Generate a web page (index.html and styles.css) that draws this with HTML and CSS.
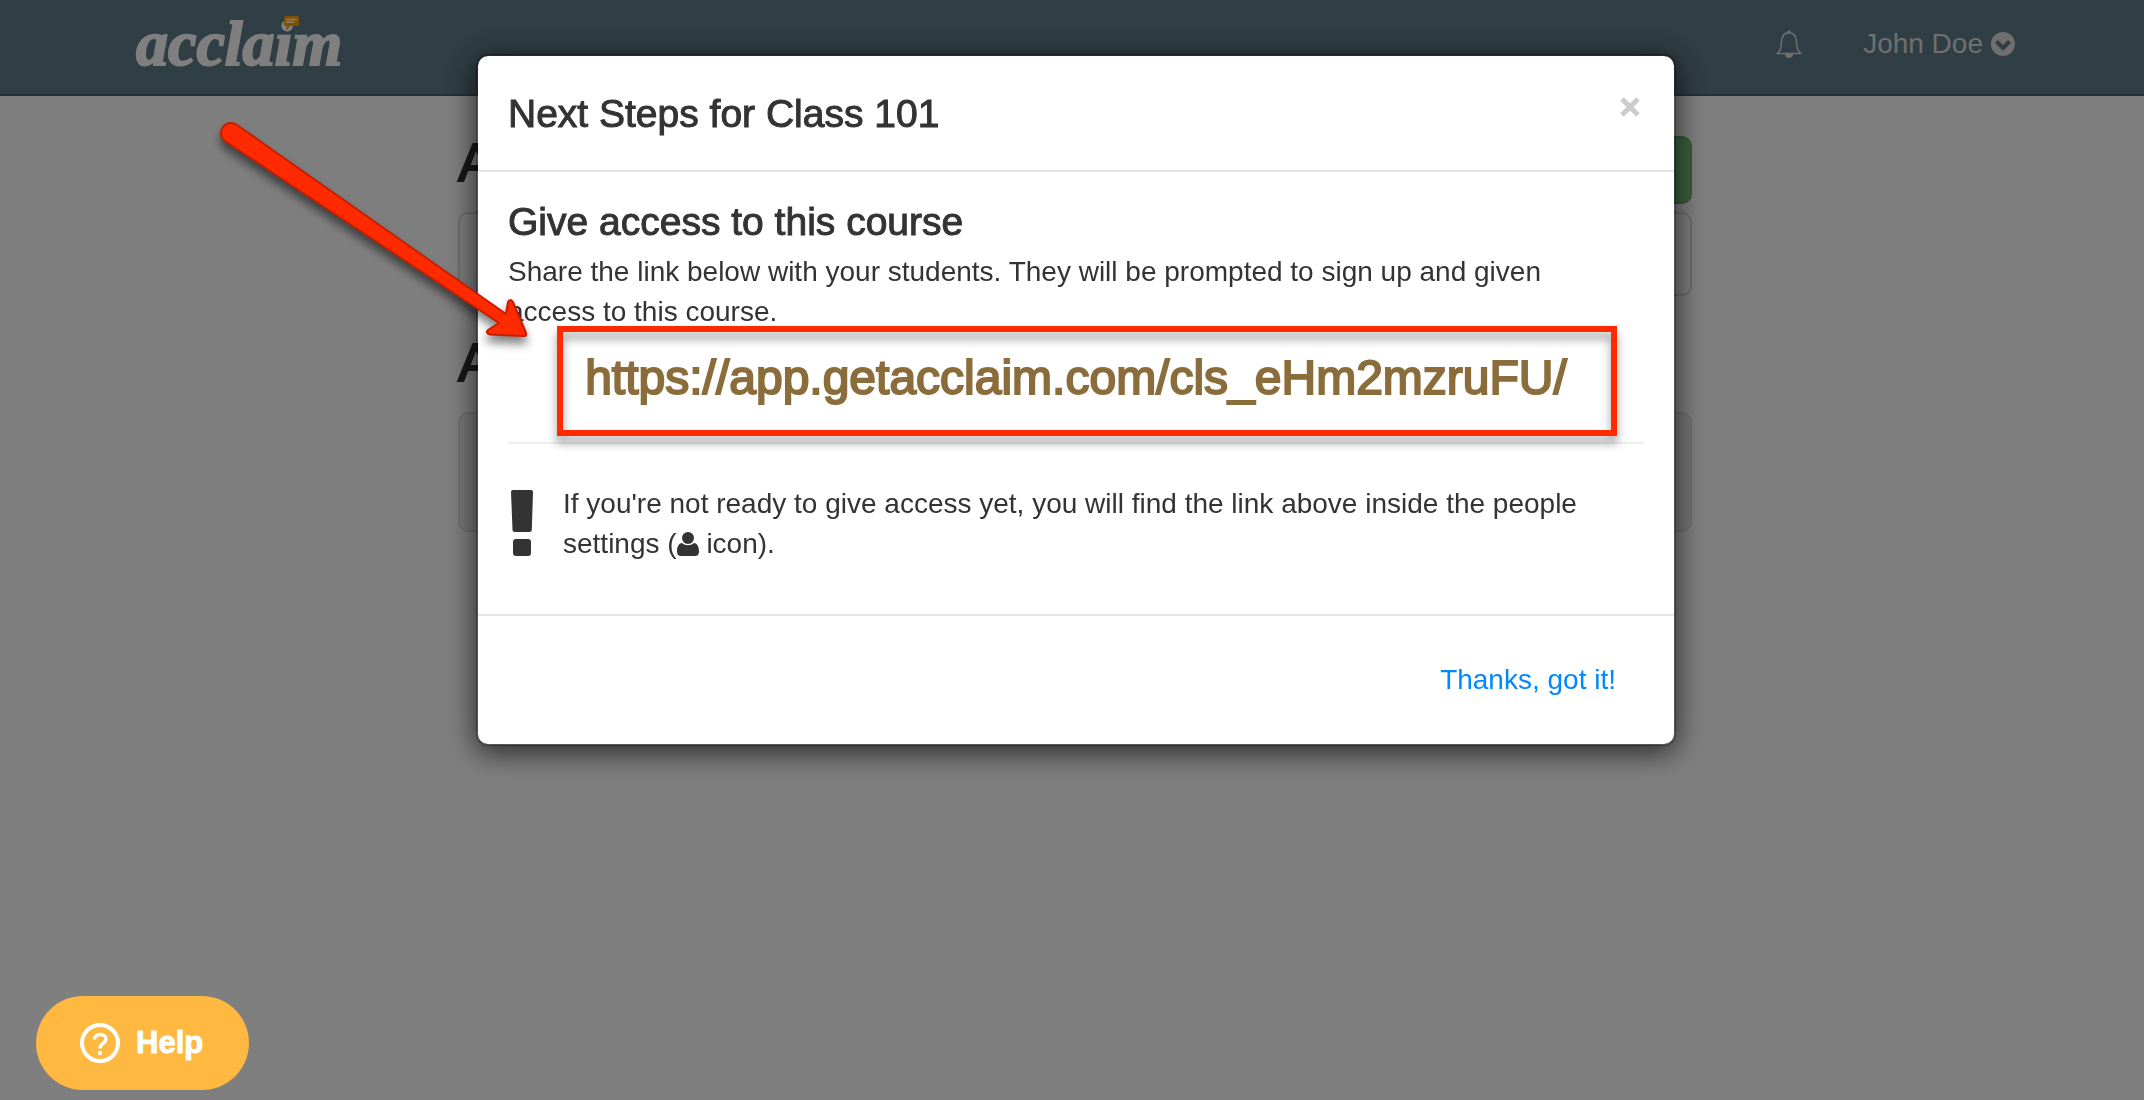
FILE: index.html
```
<!DOCTYPE html>
<html lang="en">

<head>
    <meta charset="UTF-8">
    <meta name="viewport" content="width=device-width, initial-scale=1.0">
    <title>Acclaim</title>
    <link rel="stylesheet" href="styles.css">
</head>

<body>
    <header class="navbar">
        <a class="logo" href="#">acclaim
            <svg class="logo_bubble" viewBox="0 0 15 15">
                <path d="M1.500 0h12a1.500 1.500 0 0 1 1.500 1.500v7a1.500 1.500 0 0 1-1.500 1.500H6l-3.500 4.500V10h-1A1.500 1.500 0 0 1 0 8.500v-7A1.500 1.500 0 0 1 1.500 0z" fill="#ffa000" />
                <path d="M2 3.500h11M2 6h8" stroke="#fff" stroke-width="1.300" />
            </svg>
        </a>
        <nav class="nav_right">
            <button class="bell" aria-label="Notifications">
                <svg viewBox="0 0 26 28">
                    <path d="M1 23.500c4-3 4-6 4.500-12C6 6 9 2.800 13 2.800s7 3.200 7.500 8.700c.5 6 .5 9 4.500 12z" fill="none" stroke="currentColor" stroke-width="1.500" stroke-linejoin="round" />
                    <circle cx="13" cy="1.800" r="1.500" fill="currentColor" />
                    <path d="M9 24a4 4 0 0 0 8 0z" fill="currentColor" />
                </svg>
            </button>
            <a class="user" href="#">John Doe
                <svg viewBox="0 0 24 24">
                    <circle cx="12" cy="12" r="12" fill="currentColor" />
                    <path d="M5.500 9.500l6.500 6.500 6.500-6.500" fill="none" stroke="#607c8a" stroke-width="4" />
                </svg>
            </a>
        </nav>
    </header>

    <main class="page">
        <div class="page_head">
            <h2>Active</h2>
            <button class="btn_new" aria-label="New class"></button>
        </div>
        <div class="panel"></div>
        <h2 class="archived">Archived</h2>
        <div class="panel well"></div>
    </main>

    <div class="backdrop">
        <div class="modal" role="dialog" aria-labelledby="modal_title">
            <div class="modal_header">
                <h3 id="modal_title">Next Steps for Class 101</h3>
                <button class="close" aria-label="Close">
                    <svg viewBox="0 0 20 20">
                        <path d="M2 2l16 16M18 2L2 18" stroke="currentColor" stroke-width="5" />
                    </svg>
                </button>
            </div>
            <div class="modal_body">
                <h3>Give access to this course</h3>
                <p class="intro">Share the link below with your students. They will be prompted to sign up and given access to this course.</p>
                <div class="link_wrap">
                    <a href="#">https://app.getacclaim.com/cls_eHm2mzruFU/</a>
                </div>
                <div class="note">
                    <svg class="mark" viewBox="0 0 22 66">
                        <path d="M2 0h18a2 2 0 0 1 2 2l-1.200 37.500a2.500 2.500 0 0 1-2.500 2.500H4a2.500 2.500 0 0 1-2.500-2.500L0 2a2 2 0 0 1 2-2z" />
                        <rect x="2" y="49" width="18" height="17" rx="3" />
                    </svg>
                    <p>If you're not ready to give access yet, you will find the link above inside the people settings (<svg class="person" viewBox="0 0 22 24">
                            <path d="M5 11c3.500 3 8.500 3 12 0 3.500.300 5 4 5 8.500 0 3-1.500 4.500-4 4.500H4c-2.500 0-4-1.500-4-4.500C0 15 1.500 11.300 5 11z" />
                            <circle cx="11" cy="6" r="6" />
                        </svg> icon).</p>
                </div>
            </div>
            <div class="modal_footer">
                <a href="#">Thanks, got it!</a>
            </div>
        </div>
    </div>

    <svg class="arrow" viewBox="0 0 340 240">
        <path d="M37 15L306 204L308 192Q310 188 313 192L326 223Q327 226.500 323 226L290 224.500Q285 223 288 220L299 213L25 31A9.800 9.800 0 0 1 37 15z" fill="#ff2a00" stroke="#c81e00" stroke-width="2" stroke-linejoin="round" />
    </svg>

    <button class="help">
        <svg viewBox="0 0 40 40">
            <circle cx="20" cy="20" r="18" fill="none" stroke="#fff" stroke-width="4" />
            <path d="M14.500 16.500c0-7 11.500-6.500 11.500-.5 0 4.500-6 4-6 9.500" fill="none" stroke="#fff" stroke-width="3.500" />
            <circle cx="20" cy="30" r="2.200" fill="#fff" />
        </svg>
        Help
    </button>
</body>

</html>
```
FILE: styles.css
```
* {
    margin: 0;
    padding: 0;
    box-sizing: border-box;
}

body {
    background-color: #fff;
    color: #333;
    font-family: "Helvetica Neue", "Liberation Sans", Arial, sans-serif;
    font-size: 28px;
    line-height: 40px;
    min-height: 100vh;
}

a {
    text-decoration: none;
}

button {
    border: 0;
    background: none;
    font-family: inherit;
    cursor: pointer;
}

svg {
    display: block;
}

/* top bar */
.navbar {
    display: flex;
    justify-content: space-between;
    height: 96px;
    padding: 0 129px 0 136px;
    background-color: #607c8a;
    border-bottom: 2px solid #4c6070;
}

.logo {
    position: relative;
    color: #fff;
    font-family: "Liberation Serif", serif;
    font-size: 64px;
    font-weight: bold;
    font-style: italic;
    line-height: 88px;
    -webkit-text-stroke: 2px #fff;
}

.logo_bubble {
    position: absolute;
    top: 16px;
    left: 148px;
    width: 15px;
    height: 15px;
}

.nav_right {
    display: flex;
    align-items: center;
    gap: 61px;
    height: 88px;
}

.bell,
.user {
    color: #dedede;
}

.bell svg {
    width: 26px;
    height: 28px;
}

.user {
    display: flex;
    align-items: center;
    gap: 8px;
}

.user svg {
    width: 24px;
    height: 24px;
}

/* class list */
.page {
    width: 1234px;
    max-width: 100%;
    margin: 40px auto 0;
    position: relative;
    left: 3px;
}

.page h2 {
    font-size: 54px;
    font-weight: normal;
    line-height: 52px;
    -webkit-text-stroke: 2px #333;
}

.page_head {
    display: flex;
    justify-content: space-between;
    height: 68px;
    margin-bottom: 8px;
}

.btn_new {
    width: 220px;
    background-color: #78c37c;
    border: 2px solid #6eb471;
    border-radius: 10px;
}

.panel {
    height: 84px;
    border: 2px solid #dcdcdc;
    border-radius: 10px;
}

.page .archived {
    margin: 40px 0 24px;
}

.well {
    height: 120px;
    background-color: #f0f0f0;
    border-color: #e0e0e0;
}

/* modal */
.backdrop {
    position: fixed;
    inset: 0;
    padding: 54px 0 0 8px;
    background-color: rgba(0, 0, 0, 0.5);
}

.modal {
    width: 1200px;
    max-width: 100%;
    margin: 0 auto;
    background-color: #fff;
    background-clip: padding-box;
    border: 2px solid rgba(0, 0, 0, 0.3);
    border-radius: 12px;
    box-shadow: 0 6px 30px rgba(0, 0, 0, 0.7);
}

.modal h3 {
    font-size: 39px;
    font-weight: normal;
    -webkit-text-stroke: 1px #333;
}

.modal_header {
    display: flex;
    justify-content: space-between;
    padding: 28px 34px 26px 30px;
    border-bottom: 2px solid #e5e5e5;
}

.modal_header h3 {
    line-height: 60px;
}

.close {
    height: 46px;
    color: #ccc;
}

.close svg {
    width: 20px;
    height: 20px;
}

.modal_body {
    padding: 30px 30px 50px;
}

.modal_body h3 {
    margin-bottom: 10px;
}

.intro {
    padding-right: 60px;
}

.link_wrap {
    position: relative;
    height: 112px;
    margin-bottom: 40px;
    border-bottom: 2px solid #eee;
    text-align: center;
    line-height: 92px;
}

.link_wrap a {
    color: #8a6d3b;
    font-size: 48px;
    -webkit-text-stroke: 2px #8a6d3b;
}

.link_wrap::after {
    content: "";
    position: absolute;
    top: -6px;
    right: 27px;
    bottom: 6px;
    left: 49px;
    border: 6px solid #ff2a00;
    filter: drop-shadow(0 7px 5px rgba(0, 0, 0, 0.4));
    pointer-events: none;
}

.note {
    display: flex;
    gap: 30px;
}

.mark {
    flex: none;
    width: 22px;
    height: 66px;
    margin: 6px 0 0 3px;
    fill: #333;
}

.person {
    display: inline-block;
    width: 22px;
    height: 24px;
    vertical-align: -3px;
    fill: #333;
}

.modal_footer {
    padding: 44px 58px;
    border-top: 2px solid #e5e5e5;
    text-align: right;
}

.modal_footer a {
    color: #08f;
}

/* pointer to the link */
.arrow {
    position: absolute;
    top: 110px;
    left: 200px;
    width: 340px;
    height: 240px;
    filter: drop-shadow(0 7px 5px rgba(0, 0, 0, 0.5));
    pointer-events: none;
}

.help {
    position: fixed;
    bottom: 10px;
    left: 36px;
    display: flex;
    align-items: center;
    gap: 16px;
    height: 94px;
    padding: 0 46px 0 44px;
    background-color: #ffb840;
    border-radius: 47px;
    color: #fff;
    font-size: 31px;
    font-weight: bold;
    -webkit-text-stroke: 1px #fff;
}

.help svg {
    width: 40px;
    height: 40px;
}
```
